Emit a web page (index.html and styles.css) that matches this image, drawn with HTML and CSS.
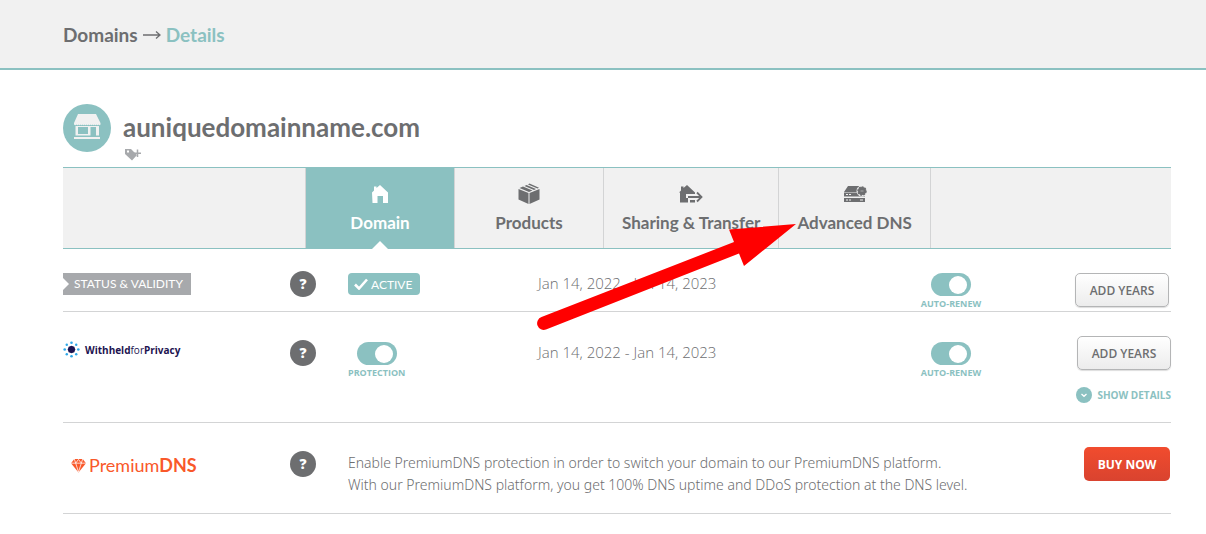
FILE: index.html
```html
<!DOCTYPE html>
<html lang="en">
<head>
    <meta charset="UTF-8">
    <meta name="viewport" content="width=device-width, initial-scale=1.0">
    <title>Domain Details</title>
    <link rel="stylesheet" href="styles.css">
</head>
<body>
    <header class="breadcrumb">
        <a href="#">Domains</a>
        <svg class="crumb-arrow" viewBox="0 0 18 12"><path d="M0 7H16.500M13 3.500L17 7L13 10.500" fill="none" stroke="#6d6e70" stroke-width="1.300"/></svg>
        <span class="current">Details</span>
    </header>
    <main class="page">
        <div class="domain-title">
            <svg class="avatar" viewBox="0 0 48 48">
                <circle cx="24" cy="24" r="24" fill="#8bc1c1"/>
                <g fill="#f1f1f1">
                    <path d="M15 10H33L37.500 19V20.500Q36.500 22 35.500 20.500Q34.500 22 33.500 20.500Q32.500 22 31.500 20.500Q30.500 22 29.500 20.500Q28.500 22 27.500 20.500Q26.500 22 25.500 20.500Q24.500 22 23.500 20.500Q22.500 22 21.500 20.500Q20.500 22 19.500 20.500Q18.500 22 17.500 20.500Q16.500 22 15.500 20.500Q14.500 22 13.500 20.500Q12.500 22 11 20.500V19Z"/>
                    <path fill-rule="evenodd" d="M12.500 22H36V31.500H12.500ZM15 23V30H25V23ZM27.500 23V31.500H33V23Z"/>
                    <path d="M11 33H37V35H11Z"/>
                </g>
            </svg>
            <div class="domain-name">
                <h1>auniquedomainname.com</h1>
                <button class="add-tag" aria-label="Add tag">
                    <svg viewBox="0 0 17 13"><path fill="#a7a9ac" fill-rule="evenodd" d="M0 1H6L12 7L7 12.500L0 6ZM2 2.500V4.500H4V2.500Z"/><path d="M12.500 1.500V9M9 5.200H16" stroke="#a7a9ac" stroke-width="1.500"/></svg>
                </button>
            </div>
        </div>

        <nav class="tabs">
            <a href="#" class="tab active">
                <svg viewBox="0 0 24 24"><path fill="#fff" d="M4 10.500L6 8.500V4.500H8.500V6L12 3L20 10.500V21H15V14H9.500V21H4.500Z"/></svg>
                Domain
            </a>
            <a href="#" class="tab">
                <svg viewBox="0 0 24 24"><path fill="#6d6e70" d="M1.500 7L11.500 11V22L1.500 17.500ZM12.500 11L22.500 7V17.500L12.500 22ZM2.500 6L6 4.500L15.500 8.500L12 10ZM7.500 4L9.500 3L19 7L17 8ZM11 2.500L12.500 1.500L22 5.700L20.500 6.400Z"/></svg>
                Products
            </a>
            <a href="#" class="tab">
                <svg viewBox="0 0 24 24"><path fill="#6d6e70" d="M0 10.500L2 8.500V4.500H4.500V6L8 3L16 10.500V12H7V16H9V20.500H1V10.500ZM11 18H16V20.500H11Z"/><path d="M9 15H22M18 10.500L22.500 15L18 19.500" fill="none" stroke="#6d6e70" stroke-width="1.800"/></svg>
                Sharing &amp; Transfer
            </a>
            <a href="#" class="tab">
                <svg viewBox="0 0 24 24"><path fill="#6d6e70" fill-rule="evenodd" d="M5 4H16V10H1ZM1 10.500H22V14.500H1ZM1 16H22V20H1ZM3 12V13H5V12ZM6 12V13H8V12ZM3 17.500V18.500H5V17.500ZM6 17.500V18.500H8V17.500ZM17 17.500V18.500H20V17.500Z"/><circle cx="19" cy="9" r="5.500" fill="#f1f1f1"/><circle cx="19" cy="9" r="4" fill="#6d6e70" stroke="#6d6e70" stroke-width="1.500" stroke-dasharray="2 1"/><path d="M17.500 9H20.500" stroke="#aaa"/></svg>
                Advanced DNS
            </a>
        </nav>

        <section class="row status-row">
            <div class="name"><span class="ribbon">STATUS &amp; VALIDITY</span></div>
            <button class="help" aria-label="Help">?</button>
            <div class="state">
                <span class="badge"><svg viewBox="0 0 14 12"><path d="M1 6.500L5 10.500L13 1.500" fill="none" stroke="#fff" stroke-width="2.600"/></svg>ACTIVE</span>
            </div>
            <div class="dates">Jan 14, 2022 - Jan 14, 2023</div>
            <label class="switch"><input type="checkbox" checked>AUTO-RENEW</label>
            <div class="actions"><button class="btn">ADD YEARS</button></div>
        </section>

        <section class="row privacy-row">
            <div class="name privacy-logo">
                <svg viewBox="0 0 18 18">
                    <path d="M9 5L12 6L13 9L12 12L9 13L6 12L5 9L6 6Z" fill="#1d1350"/>
                    <g fill="#2fa8e8"><circle cx="9" cy="1.800" r="1.400"/><circle cx="9" cy="16.200" r="1.400"/><circle cx="1.800" cy="9" r="1.400"/><circle cx="16.200" cy="9" r="1.400"/><circle cx="4" cy="4" r="1.300"/><circle cx="14" cy="4" r="1.300"/><circle cx="4" cy="14" r="1.300"/><circle cx="14" cy="14" r="1.300"/></g>
                </svg>
                <span><b>Withheld</b>for<b>Privacy</b></span>
            </div>
            <button class="help" aria-label="Help">?</button>
            <div class="state"><label class="switch"><input type="checkbox" checked>PROTECTION</label></div>
            <div class="dates">Jan 14, 2022 - Jan 14, 2023</div>
            <label class="switch"><input type="checkbox" checked>AUTO-RENEW</label>
            <div class="actions">
                <button class="btn">ADD YEARS</button>
                <button class="details">
                    <svg viewBox="0 0 16 16"><circle cx="8" cy="8" r="8" fill="#8bc1c1"/><path d="M5.500 7L8 9.300L10.500 7" fill="none" stroke="#fff" stroke-width="1.300"/></svg>
                    SHOW DETAILS
                </button>
            </div>
        </section>

        <section class="row premium-row">
            <div class="name premium-logo">
                <svg viewBox="0 0 16 16"><path fill="#f9582a" d="M3.500 1H12.500L16 5.500L8 15.500L0 5.500Z"/><path d="M0 5.500H16M3.500 1L5 5.500L8 1.500L11 5.500L12.500 1M5 5.500L8 15L11 5.500" fill="none" stroke="#fff" stroke-width=".8"/></svg>
                <span>Premium<b>DNS</b></span>
            </div>
            <button class="help" aria-label="Help">?</button>
            <p class="description">Enable PremiumDNS protection in order to switch your domain to our PremiumDNS platform.<br>With our PremiumDNS platform, you get 100% DNS uptime and DDoS protection at the DNS level.</p>
            <div class="actions"><button class="btn buy">BUY NOW</button></div>
        </section>
    </main>

    <svg class="pointer" viewBox="0 0 266 115"><path fill="#f00" d="M266 9L199 14.500L204 27L11.500 102A6.600 6.600 0 0 0 16 114.500L209 38.500L214 51Z"/></svg>
</body>
</html>
```
FILE: styles.css
```css
* {
    box-sizing: border-box;
}
body {
    margin: 0;
    position: relative;
    background: #fff;
    color: #6d6e70;
    font-family: "Open Sans", "Noto Sans", sans-serif;
    font-size: 14px;
}
a {
    color: inherit;
    text-decoration: none;
}
button {
    font-family: inherit;
    cursor: pointer;
}
.breadcrumb {
    display: flex;
    align-items: center;
    gap: 5px;
    height: 70px;
    padding: 0 35px 0 63px;
    background: #f1f1f1;
    border-bottom: 2px solid #8bc1c1;
    font-family: Lato, sans-serif;
    font-size: 19px;
    font-weight: 700;
}
.crumb-arrow {
    width: 18px;
    height: 12px;
}
.current {
    color: #8bc1c1;
}
.page {
    padding: 34px 35px 20px 63px;
}
.domain-title {
    display: flex;
    gap: 12px;
    height: 63px;
}
.avatar {
    width: 48px;
    height: 48px;
}
h1 {
    margin: 7px 0 5px;
    font-family: Lato, sans-serif;
    font-size: 26px;
    font-weight: 700;
    line-height: 32px;
}
.add-tag {
    display: block;
    padding: 0 2px;
    border: none;
    background: none;
}
.add-tag svg {
    display: block;
    width: 17px;
    height: 13px;
}

/* tabs */
.tabs {
    display: flex;
    height: 82px;
    padding-left: 242px;
    background: #f1f1f1;
    border-top: 1px solid #8bc1c1;
    border-bottom: 1px solid #8bc1c1;
}
.tab {
    position: relative;
    display: flex;
    flex-direction: column;
    align-items: center;
    gap: 6px;
    min-width: 149px;
    padding: 14px 18px 0;
    border-right: 1px solid #d3d4d5;
    font-family: Lato, sans-serif;
    font-size: 17px;
    font-weight: 700;
    line-height: 22px;
}
.tab svg {
    width: 24px;
    height: 24px;
}
.tab.active {
    min-width: 150px;
    background: #8bc1c1;
    border-left: 1px solid #d3d4d5;
    color: #fff;
}
.tab.active::after {
    content: "";
    position: absolute;
    bottom: -1px;
    left: 50%;
    margin-left: -8px;
    border: 8px solid transparent;
    border-top: none;
    border-bottom-color: #fff;
}

/* product rows */
.row {
    display: grid;
    grid-template-columns: 227px 58px 190px 1fr 60px 190px;
    align-items: start;
    border-bottom: 1px solid #d3d4d5;
}
.status-row {
    padding: 22px 0 1px;
}
.privacy-row {
    padding: 28px 0 19px;
}
.premium-row {
    padding: 28px 0 17px;
}
.ribbon {
    position: relative;
    display: inline-block;
    margin-top: 2px;
    padding: 0 8px 0 11px;
    background: #a7a9ac;
    color: #fff;
    font-family: Lato, sans-serif;
    font-size: 12px;
    line-height: 22px;
}
.ribbon::before {
    content: "";
    position: absolute;
    top: 5px;
    left: 0;
    border: 6px solid transparent;
    border-left-color: #fff;
    border-right: none;
}
.help {
    width: 26px;
    height: 26px;
    padding: 0;
    border: none;
    border-radius: 50%;
    background: #6d6e70;
    color: #fff;
    font-size: 14px;
    font-weight: 800;
    line-height: 26px;
}
.badge {
    display: inline-flex;
    align-items: center;
    gap: 3px;
    height: 22px;
    margin-top: 2px;
    padding: 0 8px 0 6px;
    border-radius: 4px;
    background: #8bc1c1;
    color: #fff;
    font-family: Lato, sans-serif;
    font-size: 12px;
}
.badge svg {
    width: 14px;
    height: 12px;
}
.dates {
    padding-top: 2px;
    font-size: 15px;
    font-weight: 300;
    line-height: 20px;
}
.switch {
    display: inline-flex;
    flex-direction: column;
    align-items: center;
    gap: 2px;
    padding-top: 2px;
    color: #8bc1c1;
    font-size: 9px;
    font-weight: 700;
    line-height: 12px;
    white-space: nowrap;
}
.switch input {
    appearance: none;
    display: flex;
    align-items: center;
    justify-content: flex-end;
    width: 40px;
    height: 23px;
    margin: 0;
    padding-right: 4px;
    border-radius: 12px;
    background: #8bc1c1;
}
.switch input::before {
    content: "";
    width: 18px;
    height: 18px;
    border-radius: 50%;
    background: #fff;
}
.actions {
    display: flex;
    flex-direction: column;
    align-items: flex-end;
    gap: 17px;
}
.status-row .actions {
    padding: 2px 2px 0 0;
}
.privacy-row .actions,
.premium-row .actions {
    margin-top: -4px;
}
.premium-row .actions {
    grid-column: 6;
    padding-right: 1px;
}
.btn {
    width: 94px;
    height: 34px;
    padding: 0;
    border: 1px solid #b4b5b6;
    border-radius: 5px;
    background: linear-gradient(#fff, #ececec);
    box-shadow: 0 1px 1px #ddd;
    color: #6d6e70;
    font-size: 12px;
    font-weight: 600;
}
.buy {
    width: 86px;
    border: none;
    background: linear-gradient(#f14c2e, #d9432f);
    box-shadow: none;
    color: #fff;
    font-weight: 700;
}
.details {
    display: flex;
    align-items: center;
    gap: 5px;
    padding: 0;
    border: none;
    background: none;
    color: #8bc1c1;
    font-size: 10px;
    font-weight: 700;
    line-height: 16px;
}
.details svg {
    width: 16px;
    height: 16px;
}
.privacy-logo {
    display: flex;
    align-items: center;
    gap: 5px;
    padding-top: 1px;
    color: #1d1350;
    font-size: 10px;
}
.privacy-logo svg {
    width: 17px;
    height: 17px;
}
.premium-logo {
    display: flex;
    align-items: center;
    gap: 3px;
    padding: 3px 0 0 8px;
    color: #f9582a;
    font-family: Lato, sans-serif;
    font-size: 18px;
    line-height: 22px;
}
.premium-logo svg {
    width: 15px;
    height: 15px;
}
.description {
    grid-column: 3 / 6;
    margin: 1px 0 0;
    font-family: "Noto Sans", "Open Sans", sans-serif;
    font-weight: 300;
    line-height: 22px;
}

/* red arrow over the page */
.pointer {
    position: absolute;
    top: 215px;
    left: 530px;
    width: 266px;
    height: 115px;
    pointer-events: none;
}
```
